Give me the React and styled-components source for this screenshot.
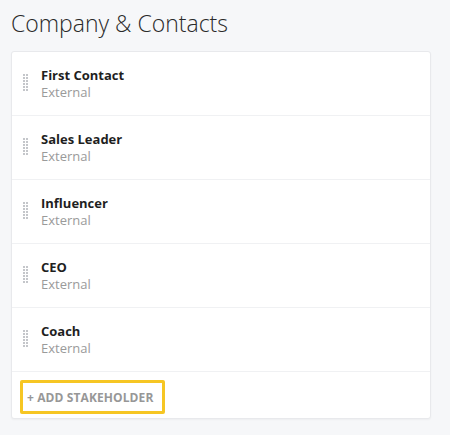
import React from 'react'
import styled, { createGlobalStyle } from 'styled-components'

const GlobalStyle = createGlobalStyle`
  html, body {
    margin: 0;
    background: #f6f7f9;
    font-family: "Open Sans", "Liberation Sans", sans-serif;
  }
`

const Page = styled.div`
  padding: 8px 19px 16px 11px;
`

const Heading = styled.h1`
  margin: 0 0 13px;
  font-size: 23px;
  font-weight: 300;
  line-height: 30px;
  color: #2a2a2a;
`

const Card = styled.div`
  background: #fff;
  border: 1px solid #e8e9ec;
  border-radius: 3px;
  box-shadow: 0 1px 2px rgba(0, 0, 0, 0.04);
`

const Row = styled.div`
  display: flex;
  align-items: flex-start;
  height: 64px;
  box-sizing: border-box;
  padding: 15px 12px 0 11px;
  border-bottom: 1px solid #f0f1f3;
`

const Handle = styled.div`
  display: grid;
  grid-template-columns: repeat(2, 2px);
  grid-auto-rows: 2px;
  gap: 1px;
  margin-top: 7px;
  margin-right: 13px;
  span {
    background: #c4c6ca;
  }
`

const Info = styled.div`
  display: flex;
  flex-direction: column;
`

const Name = styled.div`
  font-size: 13px;
  font-weight: 700;
  line-height: 17px;
  color: #1f1f1f;
`

const Kind = styled.div`
  font-size: 13px;
  line-height: 17px;
  color: #9a9a9a;
`

const Footer = styled.div`
  padding: 8px 8px 4px 8px;
`

const AddButton = styled.button`
  font-family: inherit;
  height: 34px;
  box-sizing: border-box;
  background: #fff;
  border: 3px solid #f6c623;
  border-radius: 2px;
  padding: 0 9px 0 4px;
  font-size: 12px;
  font-weight: 700;
  line-height: 17px;
  color: #979797;
  letter-spacing: 0.1px;
  cursor: pointer;
`

const stakeholders = ['First Contact', 'Sales Leader', 'Influencer', 'CEO', 'Coach']

const DragHandle = () => (
  <Handle>
    {Array.from({ length: 12 }).map((_, i) => <span key={i} />)}
  </Handle>
)

export default function App() {
  return (
    <>
      <GlobalStyle />
      <Page>
        <Heading>Company &amp; Contacts</Heading>
        <Card>
          {stakeholders.map(name => (
            <Row key={name}>
              <DragHandle />
              <Info>
                <Name>{name}</Name>
                <Kind>External</Kind>
              </Info>
            </Row>
          ))}
          <Footer>
            <AddButton>+ ADD STAKEHOLDER</AddButton>
          </Footer>
        </Card>
      </Page>
    </>
  )
}
